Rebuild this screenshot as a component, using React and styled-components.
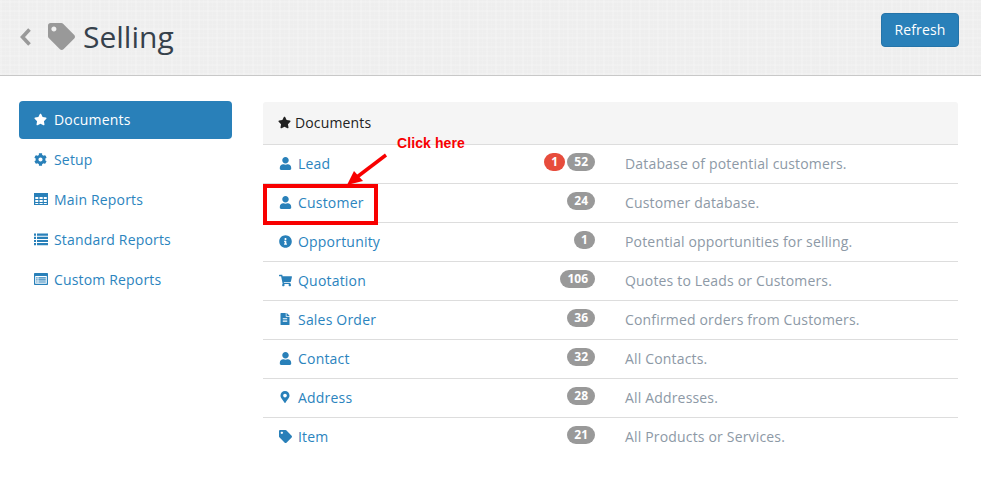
import React from "react";
import styled, { createGlobalStyle } from "styled-components";
import { FaStar, FaCog, FaUser, FaInfoCircle, FaShoppingCart, FaFileAlt, FaMapMarkerAlt, FaTag } from "react-icons/fa";

const Global = createGlobalStyle`
  html, body { margin: 0; padding: 0; background: #fff; }
  body { font-family: "Open Sans", "Noto Sans", sans-serif; font-size: 14px; color: #36414c; letter-spacing: .17px; }
`;

const Page = styled.div`
  width: 981px;
  height: 481px;
  position: relative;
  overflow: hidden;
`;

const Header = styled.header`
  height: 75px;
  box-sizing: content-box;
  border-bottom: 1px solid #c8c8c8;
  background-color: #eeeeee;
  background-image:
    repeating-linear-gradient(0deg, rgba(255,255,255,.16) 0 2px, transparent 2px 5px, rgba(255,255,255,.09) 5px 6px, transparent 6px 9px),
    repeating-linear-gradient(90deg, rgba(255,255,255,.16) 0 2px, transparent 2px 5px, rgba(255,255,255,.09) 5px 6px, transparent 6px 9px);
  display: flex;
  align-items: flex-start;
  justify-content: space-between;
  padding: 0 22px 0 19px;
`;

const TitleGroup = styled.div`
  display: flex;
  align-items: center;
  height: 73px;
`;

const Back = styled.svg`
  display: block;
  width: 13px;
  height: 20px;
  margin-right: 16px;
`;

const TitleIcon = styled.span`
  display: flex;
  color: #999;
  font-size: 27px;
  margin-right: 8px;
`;

const Title = styled.h1`
  margin: 0;
  font-size: 30px;
  font-weight: 400;
  line-height: 40px;
  letter-spacing: 0;
  color: #36414c;
`;

const RefreshButton = styled.button`
  margin-top: 13px;
  width: 78px;
  height: 34px;
  border: 1px solid #2574a9;
  border-radius: 4px;
  background: #2980b9;
  color: #fff;
  font: 400 14px "Open Sans", sans-serif;
  letter-spacing: .14px;
  padding: 0 0 2px;
`;

const Body = styled.div`
  display: flex;
  align-items: flex-start;
  padding: 25px 23px 0 19px;
  gap: 31px;
`;

const Sidebar = styled.nav`
  width: 213px;
  flex: none;
  display: flex;
  flex-direction: column;
  gap: 2px;
`;

const SideItem = styled.div`
  height: 38px;
  box-sizing: border-box;
  padding: 0 0 2px 15px;
  display: flex;
  align-items: center;
  border-radius: 4px;
  color: ${p => (p.$active ? "#fff" : "#2b84be")};
  background: ${p => (p.$active ? "#2980b9" : "transparent")};
`;

const SideIcon = styled.span`
  width: 20px;
  flex: none;
  display: flex;
  font-size: 13px;
  color: ${p => (p.$active ? "#fff" : "#2980b9")};
`;

const GlyphSvg = styled.svg`
  display: block;
  width: 14px;
  height: 14px;
`;

const Main = styled.section`
  flex: 1;
  margin-top: 1px;
`;

const Head = styled.div`
  box-sizing: border-box;
  height: 43px;
  background: #f5f5f5;
  border-bottom: 1px solid #ddd;
  border-radius: 3px 3px 0 0;
  display: flex;
  align-items: center;
  padding: 0 0 2px 15px;
  color: #222;
  letter-spacing: .14px;
`;

const HeadIcon = styled.span`
  display: flex;
  width: 17px;
  font-size: 13px;
  color: #222;
`;

const Row = styled.div`
  height: 38px;
  display: grid;
  grid-template-columns: 332px 362px;
  align-items: center;
  border-bottom: ${p => (p.$last ? "none" : "1px solid #ddd")};
`;

const RowLink = styled.div`
  display: flex;
  align-items: center;
  color: #2b84be;
  padding: 0 0 2px 15px;
  letter-spacing: .2px;
`;

const RowIcon = styled.span`
  width: 20px;
  flex: none;
  display: flex;
  justify-content: center;
  color: #2980b9;
  font-size: ${p => p.$size || 12}px;
  transform: translateX(-3px);
`;

const RowMain = styled.div`
  display: flex;
  align-items: center;
  justify-content: space-between;
`;

const Badges = styled.div`
  display: flex;
  align-items: center;
  gap: 2px;
  margin-top: -4px;
  margin-left: auto;
`;

const Badge = styled.span`
  min-width: 7px;
  padding: 0 7px;
  height: 18px;
  line-height: 18px;
  border-radius: 9px;
  font-size: 12px;
  font-weight: 700;
  letter-spacing: 0;
  color: #fff;
  text-align: center;
  background: ${p => (p.$red ? "#e74c3c" : "#999")};
`;

const Desc = styled.div`
  color: #8d99a6;
  padding: 0 0 2px 30px;
  white-space: nowrap;
`;

const Note = styled.span`
  position: absolute;
  left: 397px;
  top: 135px;
  font: 700 14px "Liberation Sans", Arial, sans-serif;
  letter-spacing: .1px;
  color: #f80000;
`;

const Highlight = styled.div`
  position: absolute;
  left: 263px;
  top: 184px;
  width: 115px;
  height: 41px;
  box-sizing: border-box;
  border: 4px solid #f80000;
`;

const Arrow = styled.svg`
  position: absolute;
  left: 340px;
  top: 150px;
`;

const TableGlyph = () => (
  <GlyphSvg viewBox="0 0 14 14" fill="currentColor">
    <path fillRule="evenodd" d="M0 1h14v12H0zM1.3 5v2h3V5zm4.2 0v2h3.2V5zm4.3 0v2h3V5zM1.3 8v2h3V8zm4.2 0v2h3.2V8zm4.3 0v2h3V8zM1.3 11v1h3v-1zm4.2 0v1h3.2v-1zm4.3 0v1h3v-1z" />
  </GlyphSvg>
);

const ListGlyph = () => (
  <GlyphSvg viewBox="0 0 14 14" fill="currentColor">
    <path d="M0 1.5h2v2.2H0zM3 1.5h11v2.2H3zM0 4.7h2v2.2H0zM3 4.7h11v2.2H3zM0 7.9h2v2.2H0zM3 7.9h11v2.2H3zM0 11.1h2v2.2H0zM3 11.1h11v2.2H3z" />
  </GlyphSvg>
);

const PanelGlyph = () => (
  <GlyphSvg viewBox="0 0 14 14" fill="currentColor">
    <path fillRule="evenodd" d="M.8 1h12.4a.8.8 0 0 1 .8.8v10.4a.8.8 0 0 1-.8.8H.8a.8.8 0 0 1-.8-.8V1.8A.8.8 0 0 1 .8 1zM1.2 4v7.8h11.6V4zM2.2 5.2h1.4v1.2H2.2zM4.4 5.2h7.4v1.2H4.4zM2.2 7.3h1.4v1.2H2.2zM4.4 7.3h7.4v1.2H4.4zM2.2 9.4h1.4v1.2H2.2zM4.4 9.4h7.4v1.2H4.4z" />
  </GlyphSvg>
);

const side = [
  ["Documents", FaStar, true],
  ["Setup", FaCog],
  ["Main Reports", TableGlyph],
  ["Standard Reports", ListGlyph],
  ["Custom Reports", PanelGlyph],
];

const rows = [
  ["Lead", FaUser, "52", "Database of potential customers.", "1", 13],
  ["Customer", FaUser, "24", "Customer database.", null, 13],
  ["Opportunity", FaInfoCircle, "1", "Potential opportunities for selling.", null, 13],
  ["Quotation", FaShoppingCart, "106", "Quotes to Leads or Customers.", null, 13],
  ["Sales Order", FaFileAlt, "36", "Confirmed orders from Customers.", null, 12],
  ["Contact", FaUser, "32", "All Contacts.", null, 13],
  ["Address", FaMapMarkerAlt, "28", "All Addresses.", null, 12],
  ["Item", FaTag, "21", "All Products or Services.", null, 13],
];

export default function App() {
  return (
    <Page>
      <Global />
      <Header>
        <TitleGroup>
          <Back viewBox="0 0 13 20">
            <path d="M10.5 2.5 L3.5 10 L10.5 17.5" stroke="#999" strokeWidth="3.6" fill="none" />
          </Back>
          <TitleIcon><FaTag /></TitleIcon>
          <Title>Selling</Title>
        </TitleGroup>
        <RefreshButton>Refresh</RefreshButton>
      </Header>
      <Body>
        <Sidebar>
          {side.map(([label, Icon, active]) => (
            <SideItem key={label} $active={active}>
              <SideIcon $active={active}><Icon /></SideIcon>
              {label}
            </SideItem>
          ))}
        </Sidebar>
        <Main>
          <Head>
            <HeadIcon><FaStar /></HeadIcon>
            Documents
          </Head>
          {rows.map(([label, Icon, count, desc, alert, size], i) => (
            <Row key={label} $last={i === rows.length - 1}>
              <RowMain>
                <RowLink>
                  <RowIcon $size={size}><Icon /></RowIcon>
                  {label}
                </RowLink>
                <Badges>
                  {alert && <Badge $red>{alert}</Badge>}
                  <Badge>{count}</Badge>
                </Badges>
              </RowMain>
              <Desc>{desc}</Desc>
            </Row>
          ))}
        </Main>
      </Body>
      <Highlight />
      <Note>Click here</Note>
      <Arrow width="50" height="40" viewBox="0 0 50 40">
        <path d="M46 5 L17 27" stroke="#f80000" strokeWidth="3.5" fill="none" />
        <path d="M7 35 L14 21 L23 31 Z" fill="#f80000" />
      </Arrow>
    </Page>
  );
}
